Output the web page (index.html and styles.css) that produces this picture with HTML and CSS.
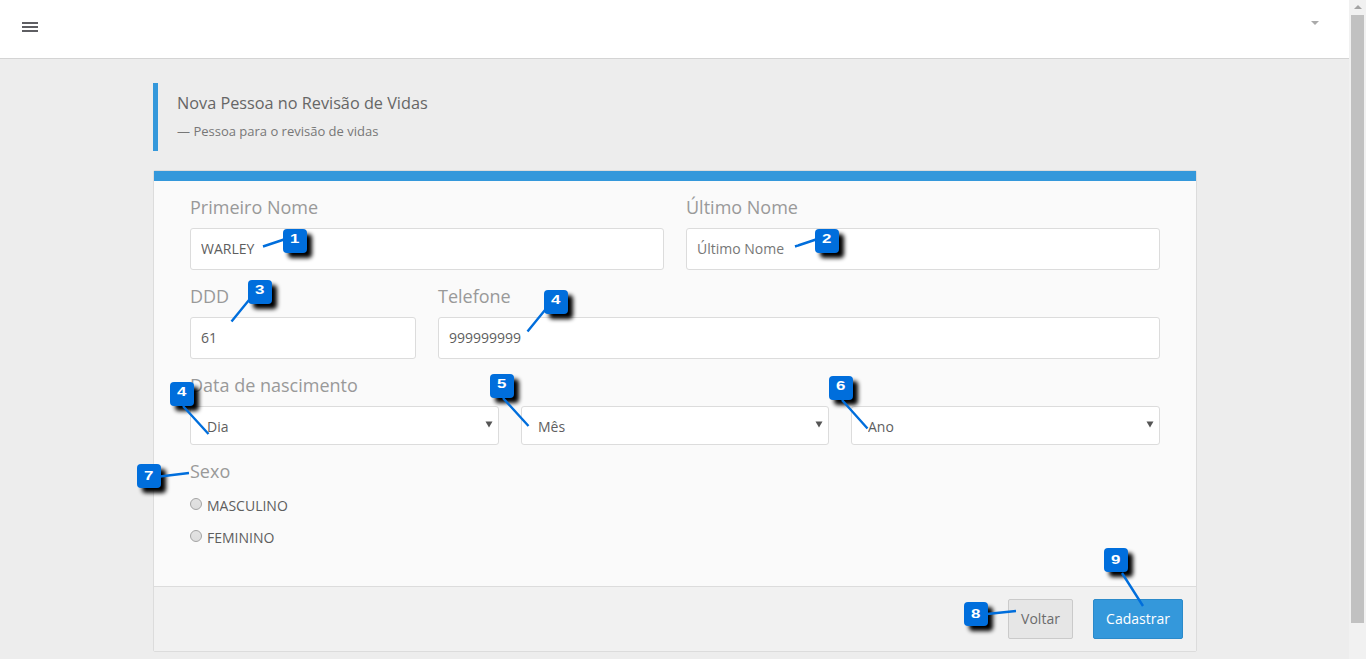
FILE: index.html
```html
<!DOCTYPE html>
<html lang="pt-BR">
<head>
<meta charset="utf-8">
<title>Nova Pessoa no Revisão de Vidas</title>
<link rel="stylesheet" href="styles.css">
</head>
<body>
<div class="page">
  <div class="content">
    <header class="topbar">
      <button class="menu" aria-label="Menu"><span></span><span></span><span></span></button>
      <span class="user-caret"></span>
    </header>
    <main class="container">
      <blockquote class="intro">
        <p class="intro-title">Nova Pessoa no Revisão de Vidas</p>
        <small class="intro-sub">— Pessoa para o revisão de vidas</small>
      </blockquote>
      <form class="card">
        <div class="card-body">
          <div class="row names">
            <div class="field"><label class="label" for="first">Primeiro Nome</label><input class="input" id="first" value="WARLEY"></div>
            <div class="field"><label class="label" for="last">Último Nome</label><input class="input" id="last" placeholder="Último Nome"></div>
          </div>
          <div class="row phone">
            <div class="field"><label class="label" for="ddd">DDD</label><input class="input" id="ddd" value="61"></div>
            <div class="field"><label class="label" for="tel">Telefone</label><input class="input" id="tel" value="999999999"></div>
          </div>
          <div class="birth">
            <div class="label">Data de nascimento</div>
            <div class="row dates">
              <div class="select-wrap"><select class="select"><option>Dia</option></select><svg class="arrow" width="8" height="7"><path d="M0.5 0.5H7.5L4 6.5Z"/></svg></div>
              <div class="select-wrap"><select class="select"><option>Mês</option></select><svg class="arrow" width="8" height="7"><path d="M0.5 0.5H7.5L4 6.5Z"/></svg></div>
              <div class="select-wrap"><select class="select"><option>Ano</option></select><svg class="arrow" width="8" height="7"><path d="M0.5 0.5H7.5L4 6.5Z"/></svg></div>
            </div>
          </div>
          <div class="gender">
            <div class="label">Sexo</div>
            <label class="option"><input class="radio" type="radio" name="sexo">MASCULINO</label>
            <label class="option"><input class="radio" type="radio" name="sexo">FEMININO</label>
          </div>
        </div>
        <div class="card-footer">
          <button class="btn" type="button">Voltar</button>
          <button class="btn primary" type="button">Cadastrar</button>
        </div>
      </form>
    </main>
  </div>
  <div class="scrollbar"><span class="scroll-up"></span><span class="scroll-thumb"></span></div>
</div>
<div class="notes">
  <span class="note n1"><b>1</b></span>
  <span class="note n2"><b>2</b></span>
  <span class="note n3"><b>3</b></span>
  <span class="note n4"><b>4</b></span>
  <span class="note n4b"><b>4</b></span>
  <span class="note n5"><b>5</b></span>
  <span class="note n6"><b>6</b></span>
  <span class="note n7"><b>7</b></span>
  <span class="note n8"><b>8</b></span>
  <span class="note n9"><b>9</b></span>
  <svg class="leaders" width="1366" height="659">
    <path d="M284 239.500L263 246.500M816 239.500L795 246.500M249 300L231.500 321.500M545 310L527.500 331.500M183 406L208.500 434M503 398L528.500 426M842 400L867.500 428.500M160 476.500L189 473M987 614L1016 611M1122 573L1143 606"/>
  </svg>
</div>
</body>
</html>
```

FILE: styles.css
```css
* { box-sizing: border-box; }
body {
  margin: 0;
  height: 659px;
  overflow: hidden;
  position: relative;
  background: #ededed;
  color: #5e5e5e;
  font: 14px/20px "Open Sans", "Noto Sans", sans-serif;
}
.page { display: flex; height: 659px; }
.content { flex: 1; overflow: hidden; }
.topbar {
  height: 59px;
  display: flex;
  justify-content: space-between;
  align-items: flex-start;
  padding: 21px 30px 0 22px;
  background: #fff;
  border-bottom: 1px solid #d4d4d4;
}
.menu {
  display: flex;
  flex-direction: column;
  gap: 2px;
  width: 16px;
  padding: 1px 0 0;
  border: 0;
  background: none;
}
.menu span { height: 2px; background: #5e5e62; }
.user-caret {
  border: 4px solid transparent;
  border-top-color: #aaa;
  border-bottom: 0;
}
.container { width: 1044px; margin-left: 153px; padding-top: 24px; }
.intro {
  height: 68px;
  margin: 0 0 19px;
  padding: 10px 19px;
  border-left: 5px solid #3498db;
}
.intro-title { margin: 0; font-size: 16.25px; line-height: 20px; color: #666; }
.intro-sub { display: block; margin-top: 8px; font-size: 13px; line-height: 20px; color: #777; }
.card {
  height: 482px;
  display: flex;
  flex-direction: column;
  border: 1px solid #dcdcdc;
  border-radius: 2px;
  background: #fafafa;
}
.card-body { flex: 1; padding: 14px 36px 0; border-top: 10px solid #3498db; }
.row { display: grid; column-gap: 22px; }
.names { grid-template-columns: 1fr 1fr; height: 89px; }
.phone { grid-template-columns: 226px 1fr; height: 89px; }
.dates { grid-template-columns: 309px 308px 309px; }
.label { display: block; height: 33px; font-size: 18px; line-height: 25px; color: #999; }
.input, .select {
  display: block;
  width: 100%;
  height: 42px;
  padding: 0 10px 2px;
  border: 1px solid #dcdcdc;
  border-radius: 3px;
  outline: 0;
  background: #fff;
  color: #5e5e5e;
  font: inherit;
}
.input::placeholder { color: #777; opacity: 1; }
.select-wrap { display: flex; position: relative; }
.select { height: 39px; padding: 2px 16px 0; appearance: none; }
.arrow { position: absolute; right: 6px; top: 15px; fill: #555; }
.birth { height: 86px; }
.gender .label { height: 31px; }
.option { display: flex; gap: 5px; height: 32px; padding-top: 6px; }
.radio {
  appearance: none;
  width: 12px;
  height: 12px;
  margin: 2px 0 0;
  border: 1px solid #a3a3a3;
  border-radius: 50%;
  background: linear-gradient(#e2e2e2, #ddd);
}
.card-footer {
  height: 65px;
  display: flex;
  justify-content: flex-end;
  gap: 20px;
  padding: 12px 13px;
  border-top: 1px solid #dcdcdc;
  background: #f1f1f1;
}
.btn {
  width: 65px;
  height: 40px;
  padding: 0;
  border: 1px solid #cacaca;
  border-radius: 2px;
  background: #e6e6e6;
  color: #6c6c6c;
  font: inherit;
}
.btn.primary { width: 90px; border-color: #2b8aca; background: #3498db; color: #fff; }
.scrollbar {
  width: 17px;
  display: flex;
  flex-direction: column;
  align-items: center;
  background: #f1f1f1;
}
.scroll-up { margin: 5px 0 6px; border: 4px solid transparent; border-bottom-color: #a3a3a3; border-top: 0; }
.scroll-thumb { width: 13px; height: 608px; background: #c1c1c1; }

/* Numbered callouts floating over the form */
.notes { position: absolute; inset: 0; pointer-events: none; }
.note {
  position: absolute;
  width: 24px;
  height: 24px;
  border-radius: 4px;
  background: #006edc;
  box-shadow: 5px 5px 4px #000;
  color: #fff;
  text-align: center;
  font: bold 13px/20px "Liberation Sans", Arial, sans-serif;
}
.note b { display: inline-block; margin-right: 1px; transform: scaleX(1.3); }
.n1 { left: 283px; top: 229px; }
.n2 { left: 815px; top: 229px; }
.n3 { left: 248px; top: 280px; }
.n4 { left: 544px; top: 290px; }
.n4b { left: 170px; top: 382px; }
.n5 { left: 490px; top: 374px; }
.n6 { left: 829px; top: 376px; }
.n7 { left: 137px; top: 464px; line-height: 24px; }
.n8 { left: 964px; top: 602px; line-height: 24px; }
.n9 { left: 1104px; top: 548px; line-height: 23px; }
.leaders { position: absolute; left: 0; top: 0; fill: none; stroke: #006edc; stroke-width: 2.4; }
```
